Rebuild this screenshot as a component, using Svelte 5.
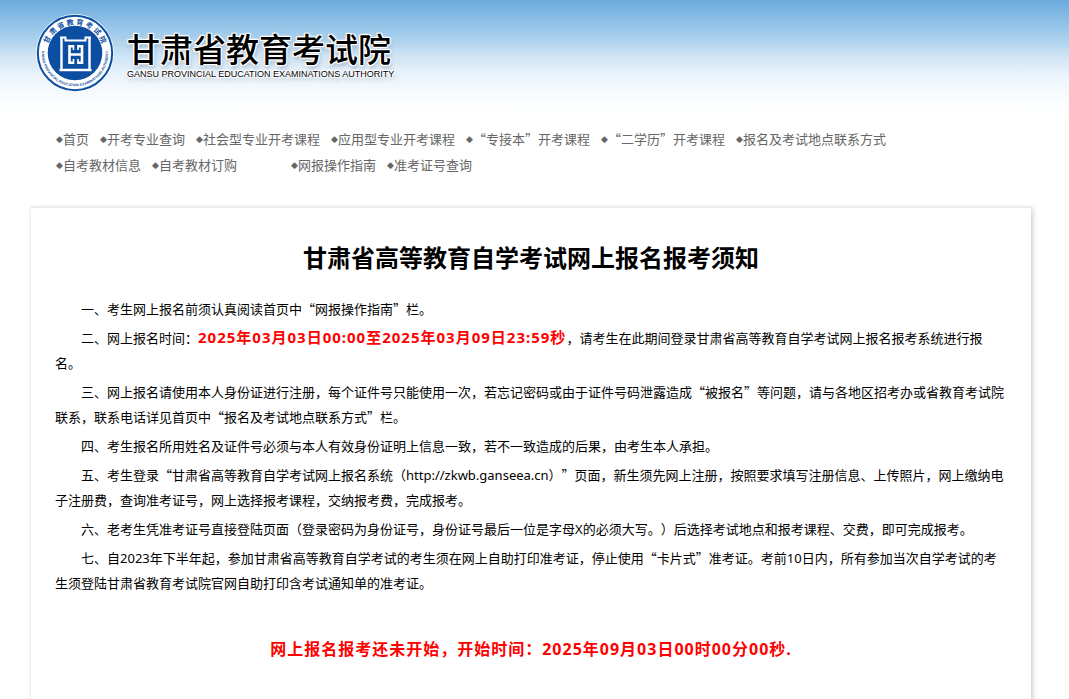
<script lang="ts">
  type NavLink = { label: string; spaced?: boolean };

  const navRows: NavLink[][] = [
    [
      { label: '首页' },
      { label: '开考专业查询' },
      { label: '社会型专业开考课程' },
      { label: '应用型专业开考课程' },
      { label: '“专接本”开考课程' },
      { label: '“二学历”开考课程' },
      { label: '报名及考试地点联系方式' },
    ],
    [
      { label: '自考教材信息' },
      { label: '自考教材订购' },
      { label: '网报操作指南', spaced: true },
      { label: '准考证号查询' },
    ],
  ];

  const sealTop = [...'甘肃省教育考试院'];
</script>

<div class="page" lang="zh-CN">
  <header class="banner">
    <svg class="seal" viewBox="0 0 80 80" role="img" aria-label="甘肃省教育考试院">
      <defs>
        <path id="seal-lower" d="M10.3 25 A33.3 33.3 0 1 0 69.7 25" />
      </defs>
      <circle cx="40" cy="40" r="39" fill="#fff" />
      <circle cx="40" cy="40" r="37.2" fill="#fff" stroke="#0b4ea2" stroke-width="2" />
      <circle cx="40" cy="40" r="27.3" fill="#0b4ea2" />
      {#each sealTop as char, i}
        <text class="seal-char" x="40" y="11.5" transform="rotate({-64 + i * 18.3} 40 40)">{char}</text>
      {/each}
      <text class="seal-latin">
        <textPath href="#seal-lower" startOffset="50%" text-anchor="middle">GANSU PROVINCIAL EDUCATION EXAMINATIONS AUTHORITY</textPath>
      </text>
      <g fill="none" stroke="#fff">
        <path d="M25 24.5 H30.5 V27.5 H50.5 V24.5 H56" stroke-width="2" />
        <path d="M26.5 24 V56 M54.5 24 V56" stroke-width="2.4" />
        <path d="M24.5 57 H56.5" stroke-width="2.6" />
        <path d="M39 33.2 H34.5 V49.8 H39 M42.5 33.2 H47 V49.8 H42.5 M34.5 41.5 H47" stroke-width="2.6" />
        <path d="M38.5 32 V37 M43 32 V37 M38.5 46 V51 M43 46 V51" stroke-width="1.6" />
      </g>
    </svg>
    <div class="brand">
      <span class="brand-name">甘肃省教育考试院</span>
      <span class="brand-latin">GANSU PROVINCIAL EDUCATION EXAMINATIONS AUTHORITY</span>
    </div>
  </header>

  <nav class="nav">
    {#each navRows as row}
      <div class="nav-row">
        {#each row as link}
          <a href="#top" class:spaced={link.spaced}><span class="mark">◆</span>{link.label}</a>
        {/each}
      </div>
    {/each}
  </nav>

  <main class="notice">
    <h1>甘肃省高等教育自学考试网上报名报考须知</h1>
    <div class="rules">
      <p>一、考生网上报名前须认真阅读首页中“网报操作指南”栏。</p>
      <p>二、网上报名时间：<strong>2025年03月03日00:00至2025年03月09日23:59秒</strong>，请考生在此期间登录甘肃省高等教育自学考试网上报名报考系统进行报名。</p>
      <p>三、网上报名请使用本人身份证进行注册，每个证件号只能使用一次，若忘记密码或由于证件号码泄露造成“被报名”等问题，请与各地区招考办或省教育考试院联系，联系电话详见首页中“报名及考试地点联系方式”栏。</p>
      <p>四、考生报名所用姓名及证件号必须与本人有效身份证明上信息一致，若不一致造成的后果，由考生本人承担。</p>
      <p>五、考生登录“甘肃省高等教育自学考试网上报名系统（<span class="latin">http://zkwb.ganseea.cn</span>）”页面，新生须先网上注册，按照要求填写注册信息、上传照片，网上缴纳电子注册费，查询准考证号，网上选择报考课程，交纳报考费，完成报考。</p>
      <p>六、老考生凭准考证号直接登陆页面（登录密码为身份证号，身份证号最后一位是字母<span class="latin">X</span>的必须大写。）后选择考试地点和报考课程、交费，即可完成报考。</p>
      <p>七、自<span class="latin">2023</span>年下半年起，参加甘肃省高等教育自学考试的考生须在网上自助打印准考证，停止使用“卡片式”准考证。考前<span class="latin">10</span>日内，所有参加当次自学考试的考生须登陆甘肃省教育考试院官网自助打印含考试通知单的准考证。</p>
    </div>
    <p class="status">网上报名报考还未开始，开始时间：2025年09月03日00时00分00秒.</p>
  </main>
</div>

<style>
  :global(body) { margin: 0; background: #fff; }
  .page { min-height: 100vh; box-sizing: border-box; display: flex; flex-direction: column; overflow: hidden; padding: 0 38px 0 31px; background: linear-gradient(#6aaadd, #8cbfe6 20px, #a8cfec 38px, #cfe4f4 56px, #ebf4fb 76px, #fbfdfe 100px, #fff 120px); font-family: "Noto Sans CJK SC", sans-serif; font-size: 13px; color: #000; text-spacing-trim: space-all; }

  .banner { display: flex; align-items: flex-start; gap: 12px; padding: 13px 0 0 4px; }
  .seal { width: 80px; height: 80px; flex: none; overflow: visible; }
  .seal-char { font-size: 7px; font-weight: 700; fill: #0b4ea2; text-anchor: middle; }
  .seal-latin { font-family: "Liberation Sans", sans-serif; font-size: 3.6px; font-weight: 700; fill: #0b4ea2; }
  .brand { display: flex; flex-direction: column; padding-top: 15px; text-shadow: 0 0 1px #fff, 0 0 1px #fff, 1px 1px 1px #fff, -1px -1px 1px #fff, 1px -1px 1px #fff, -1px 1px 1px #fff, 0 0 3px #fff, 1px 3px 4px #9ab; }
  .brand-name { font-size: 33px; font-weight: 500; line-height: 40px; white-space: nowrap; }
  .brand-latin { font-family: "Liberation Sans", Arial, sans-serif; font-size: 9px; line-height: 12px; white-space: nowrap; }

  .nav { padding: 33px 0 0 25px; }
  .nav-row { display: flex; flex-wrap: wrap; column-gap: 11px; line-height: 26px; }
  .nav a { display: flex; color: #666; text-decoration: none; white-space: nowrap; }
  .nav a:hover { text-decoration: underline; }
  .nav .spaced { margin-left: 43px; }
  .mark { width: 7px; font-family: "DejaVu Sans", sans-serif; font-size: 9px; }

  .notice { flex: 1; margin-top: 29px; padding: 31px 24px 0; border-top: 1px solid #e8ecec; background: #fff; box-shadow: 2px 2px 5px #d0d6d6, 0 0 3px #e0e4e4; }
  h1 { margin: 0 0 21px; font-size: 24px; font-weight: 700; line-height: 36px; text-align: center; }
  p { margin: 0 0 4px; line-height: 25px; text-indent: 2em; }
  strong { font-family: "Noto Sans", "Noto Sans CJK SC", sans-serif; font-size: 15px; line-height: 1; letter-spacing: 1px; color: #f00; }
  .latin { font-family: "Noto Sans", sans-serif; line-height: 1; }
  .status { margin: 42px 0 40px; font-family: "Noto Sans", "Noto Sans CJK SC", sans-serif; font-size: 16px; font-weight: 700; letter-spacing: 1px; text-align: center; text-indent: 0; color: #f00; }
</style>
